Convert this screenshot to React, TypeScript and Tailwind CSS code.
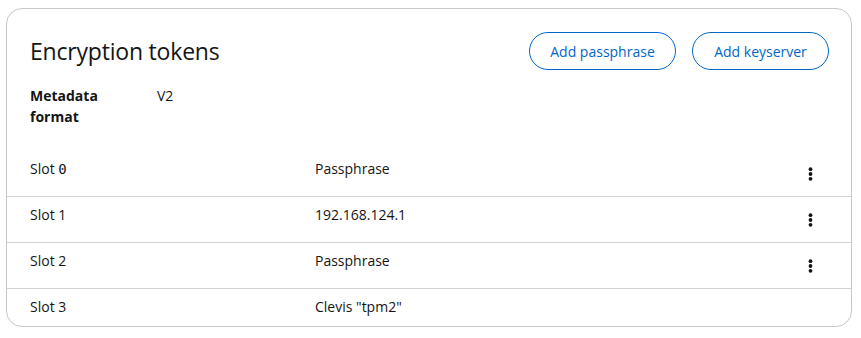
import React from 'react';

const slots = [
  { name: 'Slot', num: '0', type: 'Passphrase', menu: true },
  { name: 'Slot', num: '1', type: '192.168.124.1', menu: true },
  { name: 'Slot', num: '2', type: 'Passphrase', menu: true },
  { name: 'Slot', num: '3', type: 'Clevis "tpm2"', menu: false },
];

const Kebab = () => (
  <svg width="5" height="14" viewBox="0 0 5 14" fill="#151515">
    <circle cx="2.5" cy="2.2" r="1.9" />
    <circle cx="2.5" cy="7" r="1.9" />
    <circle cx="2.5" cy="11.8" r="1.9" />
  </svg>
);

const App = () => {
  return (
    <div className="w-[861px] h-[338px] bg-white pt-[8px] pl-[6px]" style={{ fontFamily: '"Open Sans", "Liberation Sans", sans-serif' }}>
      <div className="w-[846px] h-[319px] border border-[#c7c7c7] rounded-[16px] text-[#151515] overflow-hidden">
        {/* Header */}
        <div className="flex items-center justify-between pl-[23px] pr-[22px] pt-[23px]">
          <h1 className="text-[23px] leading-[30px] tracking-[-0.2px]">Encryption tokens</h1>
          <div className="flex gap-[16px]">
            <button className="h-[38px] w-[147px] rounded-full border border-[#0066cc] text-[14px] text-[#0066cc]">
              Add passphrase
            </button>
            <button className="h-[38px] w-[137px] rounded-full border border-[#0066cc] text-[14px] text-[#0066cc]">
              Add keyserver
            </button>
          </div>
        </div>

        {/* Metadata */}
        <div className="flex pl-[23px] mt-[15px] text-[14px] leading-[21px]">
          <div className="w-[127px] font-bold">
            Metadata
            <br />
            format
          </div>
          <div>V2</div>
        </div>

        {/* Slots */}
        <div className="mt-[24px] text-[14px] leading-[21px]">
          {slots.map((s, i) => (
            <div
              key={i}
              className={`flex items-start pl-[23px] pr-[23px] ${i < slots.length - 1 ? 'h-[46px] border-b border-[#d2d2d2]' : 'h-[37px]'}`}
            >
              <div className="w-[285px] pt-[7px]">
                {s.name}{' '}
                {s.num === '0' ? (
                  <span style={{ fontFamily: '"DejaVu Sans Mono", monospace' }}>0</span>
                ) : (
                  s.num
                )}
              </div>
              <div className="flex-1 pt-[7px]">{s.type}</div>
              {s.menu && (
                <button className="w-[36px] h-[36px] self-center flex items-center justify-center">
                  <Kebab />
                </button>
              )}
            </div>
          ))}
        </div>
      </div>
    </div>
  );
};

export default App;
